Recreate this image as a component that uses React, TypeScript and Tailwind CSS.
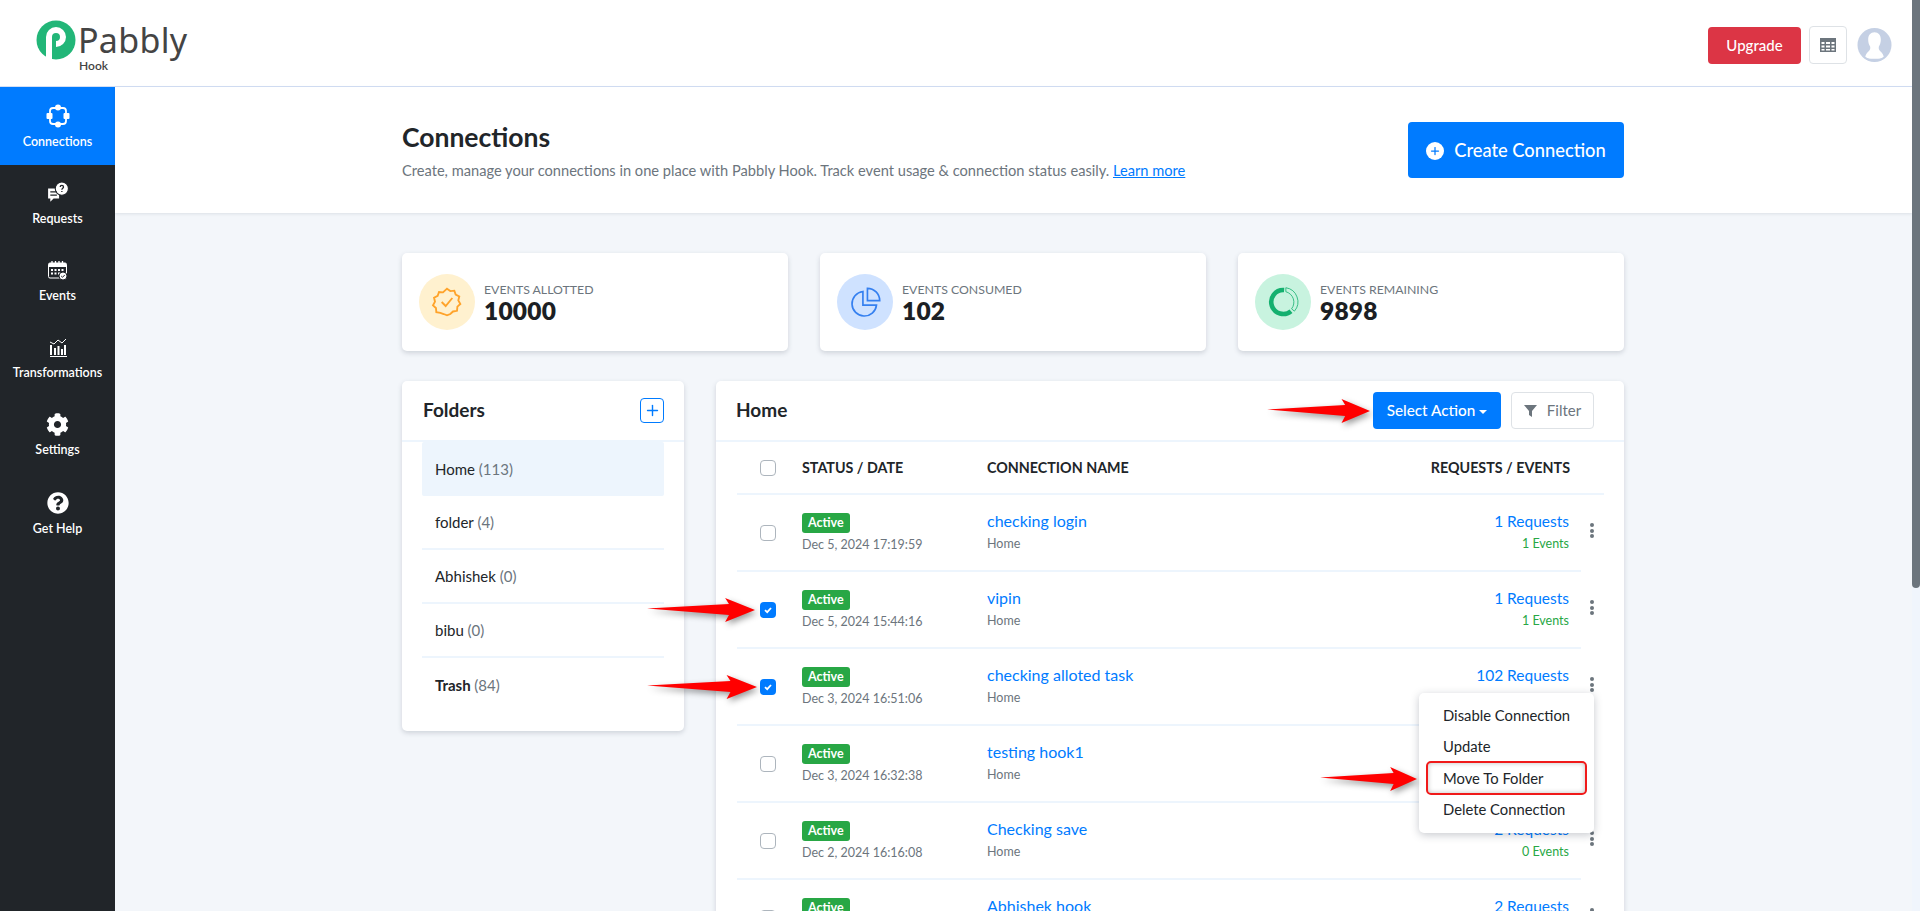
import { Plus } from 'lucide-react';
import { FaCog, FaQuestionCircle } from 'react-icons/fa';

const folders = [
  { name: 'Home', count: '(113)' },
  { name: 'folder', count: '(4)' },
  { name: 'Abhishek', count: '(0)' },
  { name: 'bibu', count: '(0)' },
];

const rows = [
  { date: 'Dec 5, 2024 17:19:59', name: 'checking login', req: '1 Requests', ev: '1 Events', checked: false },
  { date: 'Dec 5, 2024 15:44:16', name: 'vipin', req: '1 Requests', ev: '1 Events', checked: true },
  { date: 'Dec 3, 2024 16:51:06', name: 'checking alloted task', req: '102 Requests', ev: '', checked: true },
  { date: 'Dec 3, 2024 16:32:38', name: 'testing hook1', req: '', ev: '', checked: false },
  { date: 'Dec 2, 2024 16:16:08', name: 'Checking save', req: '2 Requests', ev: '0 Events', checked: false },
  { date: 'Dec 2, 2024 15:02:11', name: 'Abhishek hook', req: '2 Requests', ev: '', checked: false },
];

function Arrow({ className }: { className: string }) {
  return (
    <svg className={`drop-shadow-[2px_3px_3px_rgba(0,0,0,0.4)] ${className}`} height="24" viewBox="0 0 112 24" preserveAspectRatio="none">
      <path d="M0 10.500 L85 6 L81 0 L112 12 L81 24 L85 17 Z" fill="#ff0000" />
    </svg>
  );
}

function Check({ on }: { on: boolean }) {
  if (on) {
    return (
      <div className="flex h-4 w-4 items-center justify-center rounded-[4px] bg-[#007bff]">
        <svg width="10" height="10" viewBox="0 0 10 10">
          <path d="M2 5.200 L4.200 7.200 L8 3" fill="none" stroke="#fff" strokeWidth="1.800" />
        </svg>
      </div>
    );
  }
  return <div className="h-4 w-4 rounded-[4px] border border-[#adb5bd] bg-white" />;
}

function Dots() {
  return (
    <div className="flex flex-col items-center gap-[1.5px]">
      <span className="h-[4px] w-[4px] rounded-full bg-[#6c757d]" />
      <span className="h-[4px] w-[4px] rounded-full bg-[#6c757d]" />
      <span className="h-[4px] w-[4px] rounded-full bg-[#6c757d]" />
    </div>
  );
}

function NavItem({ label, active, icon }: { label: string; active?: boolean; icon: React.ReactNode }) {
  return (
    <div className={`flex flex-col items-center ${active ? 'h-[78px] bg-[#007bff] pt-[17px]' : 'h-[77px] pt-[16px]'}`}>
      <div className="flex h-[24px] items-center justify-center">{icon}</div>
      <div className="mt-[5px] text-[12.5px] leading-[17px] font-semibold text-white">{label}</div>
    </div>
  );
}

function StatCard({ label, value, tint, icon }: { label: string; value: string; tint: string; icon: React.ReactNode }) {
  return (
    <div className="flex h-[98px] flex-1 items-center gap-[9px] rounded-[5px] bg-white pl-[17px] shadow-[0_2px_5px_rgba(60,70,90,0.2)]">
      <div className={`flex h-[56px] w-[56px] shrink-0 items-center justify-center rounded-full ${tint}`}>{icon}</div>
      <div>
        <div className="text-[12.3px] leading-[17px] text-[#6c757d]">{label}</div>
        <div className="mt-[-1px] text-[24.5px] leading-[27px] font-extrabold tracking-[0.2px] text-[#1c1f24]">{value}</div>
      </div>
    </div>
  );
}

export default function App() {
  return (
    <div className="flex h-[911px] w-full overflow-hidden bg-[#f3f6fa] font-['Lato',sans-serif]">
      <div className="flex min-w-0 flex-1 flex-col">
        {/* Header */}
        <div className="flex h-[87px] shrink-0 items-center justify-between border-b border-[#d3dff5] bg-white pr-[20px] pl-[36px]">
          <div className="mt-[8px] flex items-start gap-[2px]">
            <svg width="40" height="40" viewBox="0 0 40 40" className="mt-[-1px]">
              <circle cx="20" cy="20" r="19.500" fill="#22b678" />
              <path d="M13 39 V17 a7 7 0 1 1 7 7" fill="none" stroke="#fff" strokeWidth="6" />
            </svg>
            <div className="flex flex-col">
              <span className="font-['Noto_Sans',sans-serif] text-[34px] leading-[38px] font-normal tracking-[0.3px] text-[#444444]">Pabbly</span>
              <span className="ml-[1px] text-[12px] leading-[14px] font-semibold text-[#444444]">Hook</span>
            </div>
          </div>
          <div className="mt-[4px] flex items-center">
            <button className="h-[37px] w-[93px] rounded-[4px] bg-[#dc3545] text-[15px] font-medium text-white">Upgrade</button>
            <div className="ml-[8px] flex h-[38px] w-[38px] items-center justify-center rounded-[4px] border border-[#dee2e6]">
              <svg width="16" height="14" viewBox="0 0 16 14" fill="#6c757d">
                <path d="M0 0h16v14H0z M1.500 4v2h3V4z M6 4v2h4V4z M11.500 4v2h3V4z M1.500 7.500v2h3v-2z M6 7.500v2h4v-2z M11.500 7.500v2h3v-2z M1.500 11v1.500h3V11z M6 11v1.500h4V11z M11.500 11v1.500h3V11z" fillRule="evenodd" />
              </svg>
            </div>
            <svg className="ml-[10px]" width="35" height="36" viewBox="0 0 36 36">
              <circle cx="18" cy="18" r="17.500" fill="#c5d0e4" />
              <path d="M18 5c-4 0-6.500 3-6.500 7.500 0 3 1 5.500 2 7 .5 2 0 3.500-2 5.500-1.500 1.500-2.500 3-3 5 5 4 14 4 19 0-.5-2-1.500-3.500-3-5-2-2-2.500-3.500-2-5.500 1-1.500 2-4 2-7C24.500 8 22 5 18 5z" fill="#fff" />
              <path d="M6 30a17.500 17.500 0 0 0 24 0c-5 3-19 3-24 0z" fill="#c5d0e4" />
            </svg>
          </div>
        </div>

        <div className="flex min-h-0 flex-1">
          {/* Sidebar */}
          <div className="w-[115px] shrink-0 bg-[#212529]">
            <NavItem
              active
              label="Connections"
              icon={
                <svg width="24" height="24" viewBox="0 0 24 24">
                  <rect x="4" y="4" width="16" height="16" rx="3" fill="none" stroke="#fff" strokeWidth="1.800" />
                  <circle cx="12" cy="3.500" r="3" fill="#fff" />
                  <circle cx="12" cy="20.500" r="3" fill="#fff" />
                  <rect x="0.500" y="9" width="6" height="6" rx="1" fill="#fff" />
                  <rect x="17.500" y="9" width="6" height="6" rx="1" fill="#fff" />
                </svg>
              }
            />
            <NavItem
              label="Requests"
              icon={
                <svg width="22" height="22" viewBox="0 0 20 20">
                  <path d="M1 6h10v9H6l-3 3v-3H1z" fill="#fff" />
                  <circle cx="13.500" cy="6" r="6" fill="#fff" stroke="#212529" />
                  <path d="M3 9h6M3 12h6" stroke="#212529" strokeWidth="1.200" />
                  <path d="M12 4.500c0-2 3-2 3 0 0 1.200-1.500 1.200-1.500 2.600M13.500 8.200v1" fill="none" stroke="#212529" strokeWidth="1.200" />
                </svg>
              }
            />
            <NavItem
              label="Events"
              icon={
                <svg width="20" height="21" viewBox="0 0 20 21">
                  <rect x="0.500" y="3" width="18" height="15" rx="1.500" fill="none" stroke="#fff" />
                  <path d="M0.500 4.500a1.500 1.500 0 0 1 1.500-1.500h15a1.500 1.500 0 0 1 1.500 1.500V7H0.500z" fill="#fff" />
                  <path d="M4 1v3M7.500 1v3M11 1v3M14.500 1v3" stroke="#fff" strokeWidth="1.300" />
                  <path d="M3 9h2v2H3zM6.500 9h2v2h-2zM10 9h2v2h-2zM13.500 9h2v2h-2zM3 12.500h2v2H3zM6.500 12.500h2v2h-2zM10 12.500h2v2h-2z" fill="#fff" />
                  <circle cx="15" cy="16" r="4" fill="#fff" stroke="#212529" />
                  <path d="M13.200 16l1.300 1.300 2.300-2.400" fill="none" stroke="#212529" />
                </svg>
              }
            />
            <NavItem
              label="Transformations"
              icon={
                <svg width="18" height="19" viewBox="0 0 18 19" fill="#fff">
                  <path d="M1 7h2v10H1zM5 10h2v7H5zM8.500 8h2v9h-2zM12 11h2v6h-2zM15 7h2v10h-2z" />
                  <path d="M1 18h17v1H1z" />
                  <path d="M1 4l4 2 4-4 4 3 4-4" fill="none" stroke="#fff" strokeWidth="1" />
                </svg>
              }
            />
            <NavItem label="Settings" icon={<FaCog size={23} color="#fff" />} />
            <div className="pt-[2px]">
              <NavItem label="Get Help" icon={<FaQuestionCircle size={22} color="#fff" />} />
            </div>
          </div>

          <div className="min-w-0 flex-1">
            {/* Title band */}
            <div className="h-[126px] bg-white shadow-[0_1px_3px_rgba(60,70,90,0.12)]">
              <div className="ml-[287px] flex w-[1222px] items-start justify-between pt-[35px]">
                <div>
                  <div className="text-[26.5px] leading-[30px] font-bold text-[#212529]">Connections</div>
                  <div className="mt-[8px] text-[14.65px] leading-[22px] text-[#6c757d]">
                    Create, manage your connections in one place with Pabbly Hook. Track event usage &amp; connection status easily.{' '}
                    <span className="text-[#007bff] underline">Learn more</span>
                  </div>
                </div>
                <button className="flex h-[56px] w-[216px] items-center justify-center gap-[10px] rounded-[4px] bg-[#007bff] pt-[1px] text-[18.3px] font-medium text-white">
                  <span className="flex h-[18px] w-[18px] items-center justify-center rounded-full bg-white">
                    <Plus size={12} color="#007bff" strokeWidth={2.500} />
                  </span>
                  Create Connection
                </button>
              </div>
            </div>

            <div className="ml-[287px] w-[1222px] pt-[40px]">
              {/* Stat cards */}
              <div className="flex gap-[32px]">
                <StatCard
                  label="EVENTS ALLOTTED"
                  value="10000"
                  tint="bg-[#fff1cf]"
                  icon={
                    <svg width="32" height="32" viewBox="0 0 24 24" fill="none" stroke="#ffa32a" strokeWidth="1.400">
                      <path d="M12 2l2.500 1.800 3-.3 1 2.900 2.700 1.400-.7 3 1.500 2.700-2.200 2-.3 3.100-3 .5L14.500 21 12 22l-2.500-1-2.500-.9-3-.5-.3-3.100-2.200-2 1.500-2.700-.7-3 2.700-1.400 1-2.900 3 .3z" />
                      <path d="M8 12l3 3 5-6" />
                    </svg>
                  }
                />
                <StatCard
                  label="EVENTS CONSUMED"
                  value="102"
                  tint="bg-[#cfe2ff]"
                  icon={
                    <svg width="31" height="31" viewBox="0 0 24 24" fill="none" stroke="#3580f0" strokeWidth="1.300">
                      <path d="M10 3.500a9.500 9.500 0 1 0 10.500 10.500H10z" />
                      <path d="M13.500 1v9.500H23A9.500 9.500 0 0 0 13.500 1z" />
                    </svg>
                  }
                />
                <StatCard
                  label="EVENTS REMAINING"
                  value="9898"
                  tint="bg-[#c8f3df]"
                  icon={
                    <svg width="32" height="32" viewBox="0 0 28 28" fill="none" stroke="#14b06f">
                      <path d="M15 3.500A10.500 10.500 0 1 0 21 22" strokeWidth="4" />
                      <path d="M16.500 1.500A12.500 12.500 0 0 1 24 22L21.500 20A9.500 9.500 0 0 0 16.500 5z" strokeWidth="0.700" />
                    </svg>
                  }
                />
              </div>

              <div className="mt-[30px] flex items-start gap-[32px]">
                {/* Folders */}
                <div className="h-[350px] w-[282px] shrink-0 rounded-[5px] bg-white shadow-[0_2px_5px_rgba(60,70,90,0.2)]">
                  <div className="flex h-[61px] items-center justify-between border-b-2 border-[#edf5fd] pr-[20px] pl-[21px]">
                    <span className="text-[19px] font-bold text-[#212529]">Folders</span>
                    <span className="flex h-[25px] w-[24px] items-center justify-center rounded-[4px] border border-[#007bff]">
                      <Plus size={17} color="#007bff" strokeWidth={2} />
                    </span>
                  </div>
                  <div className="px-[20px]">
                    {folders.map((f, i) => (
                      <div
                        key={f.name}
                        className={`flex h-[54px] items-center pl-[13px] text-[15px] text-[#212529] ${i === 0 ? 'rounded-[2px] bg-[#edf5fd]' : 'border-b-2 border-[#edf5fd]'}`}
                      >
                        {f.name}&nbsp;<span className="text-[#6c757d]">{f.count}</span>
                      </div>
                    ))}
                    <div className="flex h-[54px] items-center pl-[13px] text-[15px] font-bold text-[#212529]">
                      Trash&nbsp;<span className="font-normal text-[#6c757d]">(84)</span>
                    </div>
                  </div>
                </div>

                {/* Connections table */}
                <div className="relative min-w-0 flex-1 rounded-[5px] bg-white shadow-[0_2px_5px_rgba(60,70,90,0.2)]">
                  <div className="flex h-[61px] items-center border-b-2 border-[#edf5fd] pr-[30px] pl-[20px]">
                    <span className="text-[19px] font-bold text-[#212529]">Home</span>
                    <button className="ml-auto flex h-[37px] w-[128px] items-center justify-center gap-[4px] rounded-[4px] bg-[#007bff] text-[15.3px] font-medium text-white">
                      Select Action
                      <span className="mt-[2px] h-0 w-0 border-x-[4px] border-t-[4px] border-x-transparent border-t-white" />
                    </button>
                    <button className="ml-[10px] flex h-[37px] w-[83px] items-center justify-center gap-[10px] rounded-[4px] border border-[#dee2e6] text-[15px] text-[#6c757d]">
                      <svg width="13" height="12" viewBox="0 0 13 12" fill="#6c757d">
                        <path d="M0 0h13L8 6v6L5 10V6z" />
                      </svg>
                      Filter
                    </button>
                  </div>

                  <div className="pl-[21px]">
                    <div className="mr-[20px] flex h-[53px] items-center border-b-2 border-[#edf5fd] text-[14.3px] font-bold text-[#212529]">
                      <div className="flex w-[65px] justify-center pr-[3px]">
                        <Check on={false} />
                      </div>
                      <div className="w-[185px]">STATUS / DATE</div>
                      <div className="flex-1">CONNECTION NAME</div>
                      <div className="pr-[34px]">REQUESTS / EVENTS</div>
                    </div>
                    {rows.map((r) => (
                      <div key={r.date} className="mr-[43px] flex h-[77px] items-center border-b-2 border-[#edf5fd]">
                        <div className="flex w-[65px] justify-center pr-[3px]">
                          <Check on={r.checked} />
                        </div>
                        <div className="w-[185px]">
                          <span className="block w-fit rounded-[3px] bg-[#28a745] px-[6px] text-[12.5px] leading-[20px] font-bold text-white">Active</span>
                          <div className="mt-[4px] text-[12.5px] leading-[16px] text-[#6c757d]">{r.date}</div>
                        </div>
                        <div className="flex-1 pb-[2px]">
                          <div className="text-[16px] leading-[20px] text-[#007bff]">{r.name}</div>
                          <div className="mt-[5px] text-[12.5px] leading-[16px] text-[#6c757d]">Home</div>
                        </div>
                        <div className="relative mr-[12px] pb-[2px] text-right">
                          <div className="text-[15.5px] leading-[20px] text-[#007bff]">{r.req || '\u00a0'}</div>
                          <div className="mt-[5px] text-[12.5px] leading-[16px] text-[#28a745]">{r.ev || '\u00a0'}</div>
                          <div className="absolute top-[12px] -right-[25px]">
                            <Dots />
                          </div>
                        </div>
                      </div>
                    ))}
                  </div>

                  {/* Row action menu */}
                  <div className="absolute top-[312px] right-[30px] w-[175px] rounded-[5px] bg-white pt-[7px] pb-[8px] text-[14.8px] text-[#212529] shadow-[0_2px_8px_rgba(30,40,60,0.25)]">
                    <div className="flex h-[31px] items-center pl-[24px]">Disable Connection</div>
                    <div className="flex h-[31px] items-center pl-[24px]">Update</div>
                    <div className="mx-[7px] -my-[1px] flex h-[34px] items-center rounded-[5px] border-2 border-[#f01a1a] pl-[15px] shadow-[inset_0_0_5px_rgba(0,0,0,0.25)]">Move To Folder</div>
                    <div className="flex h-[31px] items-center pl-[24px]">Delete Connection</div>
                  </div>

                  <Arrow className="absolute top-[18px] left-[551px] w-[103px]" />
                  <Arrow className="absolute top-[217px] left-[-69px] w-[108px]" />
                  <Arrow className="absolute top-[294px] left-[-69px] w-[110px]" />
                  <Arrow className="absolute top-[386px] left-[604px] w-[97px]" />
                </div>
              </div>
            </div>
          </div>
        </div>
      </div>

      {/* Scrollbar */}
      <div className="w-[8px] shrink-0 bg-[#f0f5fc]">
        <div className="h-[588px] w-full rounded-b-[4px] bg-[#6c757d]" />
      </div>
    </div>
  );
}
